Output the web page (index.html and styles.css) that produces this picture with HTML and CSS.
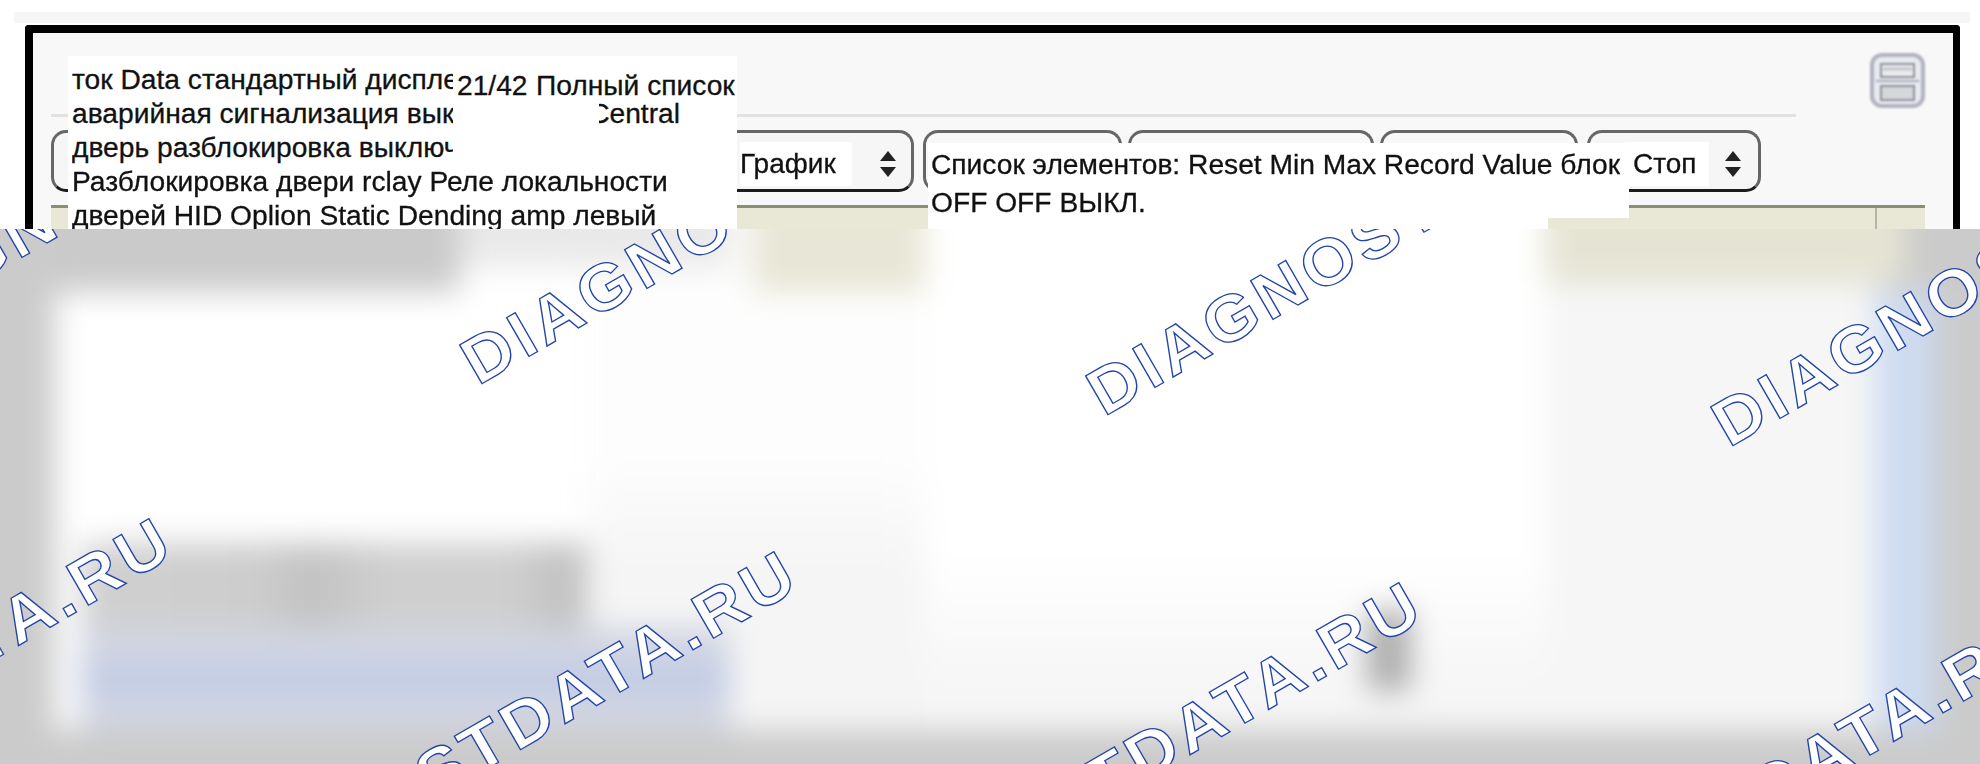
FILE: index.html
```html
<!DOCTYPE html>
<html lang="ru">
<head>
<meta charset="utf-8">
<title>Data</title>
<link rel="stylesheet" href="styles.css">
</head>
<body>
<section class="upper">
  <div class="band">
    <div class="frame">
      <header class="head">
        <div class="head-rule"></div>
        <svg class="split-icon" viewBox="0 0 55 55" aria-hidden="true">
          <rect x="2" y="2" width="51" height="51" rx="10" fill="#e8eaf0" stroke="#b0b3be" stroke-width="4"/>
          <rect x="11" y="11" width="33" height="13" fill="#ececef" stroke="#8f9198" stroke-width="2"/>
          <line x1="13" y1="16" x2="42" y2="16" stroke="#c4c5ca" stroke-width="3"/>
          <rect x="11" y="33" width="33" height="14" fill="#d6d7db" stroke="#8f9198" stroke-width="2"/>
          <line x1="6" y1="28" x2="49" y2="28" stroke="#a9acb6" stroke-width="2"/>
        </svg>
      </header>
      <div class="toolbar">
        <div class="control select wide">
          <span class="field">График</span>
          <svg class="spin" viewBox="0 0 20 28" aria-hidden="true"><path d="M10 1 18 11H2zM10 27 2 17H18z"/></svg>
        </div>
        <div class="control btn first-btn"></div>
        <div class="control btn second-btn"></div>
        <div class="control btn third-btn"></div>
        <div class="control select last">
          <span class="field stop">Стоп</span>
          <svg class="spin" viewBox="0 0 20 28" aria-hidden="true"><path d="M10 1 18 11H2zM10 27 2 17H18z"/></svg>
        </div>
      </div>
      <div class="thead"><div class="thead-cell"></div><div class="thead-end"></div></div>
    </div>
  </div>

  <div class="note note-left">
    <div class="note-row">
      <span class="clip">ток Data стандартный дисплей</span>
      <span class="count">21/42</span><span class="full">Полный список</span>
    </div>
    <div class="note-row">
      <span class="clip">аварийная сигнализация выключена</span>
      <span class="clip-end"><span>Central</span></span>
    </div>
    <div class="note-row"><span class="clip">дверь разблокировка выключена</span></div>
    <div class="note-row">Разблокировка двери rclay Реле локальности</div>
    <div class="note-row">дверей HID Oplion Static Dending amp левый</div>
  </div>

  <div class="note-right">
    <div class="note-main">
      <div>Список элементов: Reset Min Max Record Value блок</div>
      <div>OFF OFF ВЫКЛ.</div>
    </div>
    <div class="note-foot"></div>
  </div>
</section>

<section class="lower">
  <div class="smear">
    <div class="s-mid"></div>
    <div class="s-centre"></div>
    <div class="s-right"></div>
    <div class="s-blue"></div>
    <div class="s-left"></div>
    <div class="s-top"></div>
    <div class="s-top-fade"></div>
    <div class="s-beige"></div>
    <div class="s-beige-r"></div>
    <div class="s-edge"></div>
    <div class="s-box"></div>
    <div class="s-link"><div class="s-link-in"></div></div>
    <div class="s-dot"></div>
    <div class="s-bottom"></div>
  </div>
  <svg class="marks" viewBox="0 229 1980 535" aria-hidden="true">
    <g class="mark">
      <text transform="translate(-147 355) rotate(-30) scale(1.06 1)">DIAGNOSTDATA.RU</text>
      <text transform="translate(478 386) rotate(-30) scale(1.06 1)">DIAGNOSTDATA.RU</text>
      <text transform="translate(1104 417) rotate(-30) scale(1.06 1)">DIAGNOSTDATA.RU</text>
      <text transform="translate(1729 448) rotate(-30) scale(1.06 1)">DIAGNOSTDATA.RU</text>
      <text transform="translate(-455 919) rotate(-30) scale(1.06 1)">DIAGNOSTDATA.RU</text>
      <text transform="translate(170 952) rotate(-30) scale(1.06 1)">DIAGNOSTDATA.RU</text>
      <text transform="translate(795 983) rotate(-30) scale(1.06 1)">DIAGNOSTDATA.RU</text>
      <text transform="translate(1420 1015) rotate(-30) scale(1.06 1)">DIAGNOSTDATA.RU</text>
    </g>
  </svg>
</section>
</body>
</html>
```
FILE: styles.css
```css
* { box-sizing: border-box; }
html, body { margin: 0; padding: 0; background: #fff; overflow: hidden; }
body {
  width: 1980px;
  height: 764px;
  font-family: "Liberation Sans", Arial, sans-serif;
  color: #111;
  display: flex;
  flex-direction: column;
}

/* sharp upper part */
.upper { position: relative; height: 229px; overflow: hidden; flex: none; }
.band {
  margin: 12px 10px 0 14px;
  height: 217px;
  background: linear-gradient(#f6f6f6 11px, #fff 11px);
  padding: 13px 0 0 11px;
}
.frame {
  width: 1935px;
  height: 204px;
  border: solid #000;
  border-width: 8px 7px 0 8px;
  border-radius: 4px 4px 0 0;
  background: #f8f8f8;
  padding-left: 18px;
  filter: blur(.6px);
}
.head { display: flex; height: 85px; }
.head-rule { width: 1745px; height: 84px; border-bottom: 3px solid #e2e2e2; }
.split-icon { width: 55px; height: 55px; margin: 20px 0 0 74px; filter: blur(.8px); }

.toolbar { display: flex; height: 62px; margin-top: 12px; width: 1710px; }
.control { height: 62px; padding-top: 6px; border: 3px solid #666; border-bottom-color: #1c1c1c; border-radius: 15px; display: flex; align-items: center; }
.select.wide { width: 863px; justify-content: flex-end; padding-right: 13px; background: #f6f6f6; }
.first-btn { width: 199px; margin-left: 9px; }
.second-btn { width: 246px; margin-left: 6px; }
.third-btn { width: 198px; margin-left: 6px; }
.select.last { width: 174px; margin-left: 9px; justify-content: flex-end; padding-right: 15px; background: #f6f6f6; }
.field {
  font-size: 28px;
  background: #fff;
  height: 44px;
  line-height: 44px;
  white-space: nowrap;
  -webkit-text-stroke: .3px #111;
}
.wide .field { width: 112px; margin-right: 26px; }
.stop { width: 84px; margin-right: 14px; padding-left: 8px; }
.spin { width: 20px; height: 28px; fill: #222; }

.thead { display: flex; width: 1874px; height: 40px; margin-top: 13px; border-top: 3px solid #8d8c74; background: #e9e7d6; }
.thead-cell { width: 1826px; border-right: 2px solid #b7b6a6; }
.thead-end { flex: 1; }

/* translation patches lying over the window */
.note-left {
  position: absolute;
  left: 68px;
  top: 56px;
  width: 669px;
  height: 173px;
  background: #fff;
  padding: 6px 0 0 4px;
  font-size: 28.2px;
  -webkit-text-stroke: .3px #111;
  filter: blur(.6px);
}
.note-row { display: flex; height: 34px; line-height: 34px; white-space: nowrap; }
.clip { width: 381px; overflow: hidden; flex: none; }
.count { margin: 6px 0 0 4px; width: 79px; flex: none; }
.full { margin-top: 6px; }
.clip-end { display: flex; justify-content: flex-end; overflow: hidden; width: 81px; margin-left: 146px; flex: none; }

.note-right {
  position: absolute;
  left: 928px;
  top: 143px;
  width: 701px;
  font-size: 28.2px;
  line-height: 38px;
  -webkit-text-stroke: .3px #111;
  filter: blur(.6px);
}
.note-main { height: 75px; background: #fff; padding: 2px 0 0 3px; white-space: nowrap; overflow: hidden; }
.note-foot { height: 11px; width: 620px; background: #fff; }

/* blurred lower part */
.lower { position: relative; height: 535px; overflow: hidden; flex: none; background: #fff; }
.smear {
  display: grid;
  width: 2060px;
  height: 615px;
  margin: -40px 0 0 -40px;
  grid-template-columns: 95px 405px 127px 143px 195px 620px 330px 60px 85px;
  grid-template-rows: 103px 251px 84px 103px 74px;
  filter: blur(15px);
}
.smear > div { min-width: 0; min-height: 0; }
.s-mid { grid-column: 4 / 6; grid-row: 1 / 5; background: linear-gradient(#fdfdfd 50%, #f5f5f5 70%); }
.s-centre { grid-column: 6; grid-row: 1 / 5; background: linear-gradient(#fff 68%, #f6f6f6 92%); }
.s-right { grid-column: 7; grid-row: 1 / 5; background: #f6f6f6; }
.s-blue { grid-column: 8; grid-row: 1 / 5; background: linear-gradient(#cbcbcb 103px, #cddbf1 103px); }
.s-left { grid-column: 1; grid-row: 1 / 6; background: #cbcbcb; }
.s-top { grid-column: 2 / 3; grid-row: 1; background: #cacaca; }
.s-top-fade { grid-column: 3 / 5; grid-row: 1; height: 78px; background: #e9e9e9; }
.s-beige { grid-column: 5; grid-row: 1; margin-left: 22px; background: #e8e6d6; }
.s-beige-r { grid-column: 7 / 9; grid-row: 1; margin-right: 30px; height: 95px; background: #e5e4d4; }
.s-edge { grid-column: 9; grid-row: 1 / 6; background: #cbcbcb; }
.s-box { grid-column: 2 / 4; grid-row: 3; margin-left: 27px; background: linear-gradient(90deg, #d0d0d0, #cdcdcd 35%, #c2c2c2 45%, #cfcfcf 60%, #cfcfcf 85%, #c2c2c2 95%); }
.s-link { grid-column: 2 / 5; grid-row: 4; margin-left: 25px; background: #d2d6e3; display: flex; align-items: center; }
.s-link-in { width: 100%; height: 34px; background: #c2cce4; }
.s-dot { grid-column: 6; grid-row: 3 / 5; width: 44px; height: 80px; margin: 68px 0 0 442px; background: #adadad; }
.s-bottom { grid-column: 1 / 10; grid-row: 5; background: #cbcbcb; }

.marks { position: absolute; left: 0; top: 0; width: 1980px; height: 535px; }
.mark text {
  font-family: "Liberation Sans", Arial, sans-serif;
  font-weight: 700;
  font-size: 65px;
  letter-spacing: 4.3px;
  fill: #fff;
  stroke: #2445a8;
  stroke-width: 1.3px;
}
```
